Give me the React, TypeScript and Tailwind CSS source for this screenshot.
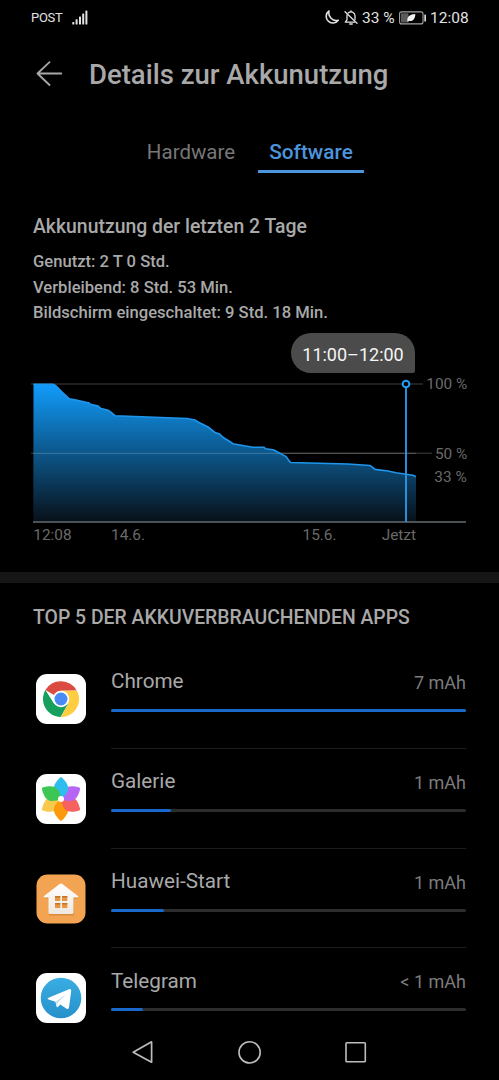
import type { ReactNode } from "react";

interface AppUsage {
  name: string;
  usage: string;
  percent: number;
  icon: ReactNode;
}

// Battery level over the last two days, in chart pixels
const LEVELS =
  "33.5,8.3 53,8.3 55.5,9.5 62,16 69,22.7 76,24 89,27 90.5,28.3 98,30 101,32.5 108,34.2 110.5,36 115,39.7 187,42.5 195,44 199,46.5 208,51 215,56.5 219.5,58 224,62 229,65 233,67.7 244,69.8 253,71.3 264,71.3 265.5,72.8 274,74 277,75.8 286,80.5 288.5,84 290.5,86.5 348,88 370,89.5 372,90.8 375,93.4 388,95 396,96.8 406,98.3 413,99.3 416,100.7";

function ChromeIcon() {
  return (
    <svg width="50" height="50" viewBox="0 0 50 50">
      <rect width="50" height="50" rx="11" fill="#fff" />
      <path d="M25 25 L9.4 16 A18 18 0 0 1 40.6 16.5 L25 16.7 Z" fill="#dc4b41" />
      <path d="M25 16.7 L41 16.7 A18 18 0 0 1 25 43 L32.2 29.2 Z" fill="#fecd40" />
      <path d="M9.4 16 L17.8 29.2 L25 33.3 L32.2 29.2 L24.6 43 A18 18 0 0 1 9.4 16 Z" fill="#17a05d" />
      <circle cx="25" cy="25" r="8.3" fill="#fff" />
      <circle cx="25" cy="25" r="6.5" fill="#4a8af4" />
    </svg>
  );
}

function GalleryIcon() {
  return (
    <svg width="50" height="50" viewBox="0 0 50 50">
      <defs>
        <path id="petal" d="M24.2 3.4 Q25 2.7 25.8 3.4 C29 6.5 31.6 9.6 32.2 13.4 C32.6 17.5 29.5 21.5 25 25 C20.5 21.5 17.4 17.5 17.8 13.4 C18.4 9.6 21 6.5 24.2 3.4 Z" />
      </defs>
      <rect width="50" height="50" rx="11" fill="#fff" />
      <use href="#petal" fill="#f9c94d" transform="rotate(240 25 25)" />
      <use href="#petal" fill="#fb9a0c" transform="rotate(180 25 25)" />
      <use href="#petal" fill="#f6625f" transform="rotate(120 25 25)" />
      <use href="#petal" fill="#b765f5" transform="rotate(60 25 25)" />
      <use href="#petal" fill="#2fbdee" />
      <use href="#petal" fill="#3dc653" transform="rotate(300 25 25)" />
      <circle cx="25" cy="25" r="3" fill="#fff" />
    </svg>
  );
}

function HomeIcon() {
  return (
    <svg width="50" height="50" viewBox="0 0 50 50">
      <defs>
        <linearGradient id="wall" x1="0" y1="0" x2="0" y2="1">
          <stop offset="0" stopColor="#ffffff" />
          <stop offset="1" stopColor="#eee7df" />
        </linearGradient>
      </defs>
      <rect x="0.5" y="0.5" width="49" height="49" rx="11" fill="#f3a453" />
      <path d="M25 10.5 L43 24 L38 25 V41.5 H13 V25 L8 24 Z" fill="#c77d31" opacity="0.6" />
      <path
        d="M24 9.8 Q25 9 26 9.8 L42 22 Q43 23.4 41.5 23.4 H37.5 V38.5 Q37.5 40 36 40 H14 Q12.5 40 12.5 38.5 V23.4 H8.5 Q7 23.4 8 22 Z"
        fill="url(#wall)"
      />
      <path d="M19 22h5.3v5H19zM26 22h5.3v5H26zM19 29h5.3v5H19zM26 29h5.3v5H26z" fill="#e79642" />
      <path d="M19 22h5.3v1.5H19zM26 22h5.3v1.5H26zM19 29h5.3v1.5H19zM26 29h5.3v1.5H26z" fill="#c3752c" />
    </svg>
  );
}

function TelegramIcon() {
  return (
    <svg width="50" height="50" viewBox="0 0 50 50">
      <defs>
        <linearGradient id="sky" x1="0" y1="0" x2="0" y2="1">
          <stop offset="0" stopColor="#39aee2" />
          <stop offset="1" stopColor="#2790cb" />
        </linearGradient>
      </defs>
      <rect width="50" height="50" rx="11" fill="#fff" />
      <circle cx="25" cy="25" r="20.3" fill="url(#sky)" />
      <path
        d="M12.5 24.8 L33 16.2 Q35.4 15.5 35.2 18 L33 34.6 Q32.5 37 30.2 35.5 L24.4 31.4 L21.8 34 Q20.8 34.8 20.5 33.2 L19.4 28.8 L12.5 26.5 Q10.6 25.7 12.5 24.8 Z"
        fill="#fff"
      />
      <path d="M19.6 28.6 L30 21.2 L22.2 29.6 L21.3 33 Z" fill="#c9e3f2" />
    </svg>
  );
}

const apps: AppUsage[] = [
  { name: "Chrome", usage: "7 mAh", percent: 100, icon: <ChromeIcon /> },
  { name: "Galerie", usage: "1 mAh", percent: 17, icon: <GalleryIcon /> },
  { name: "Huawei-Start", usage: "1 mAh", percent: 15, icon: <HomeIcon /> },
  { name: "Telegram", usage: "< 1 mAh", percent: 9.1, icon: <TelegramIcon /> },
];

function StatusBar() {
  return (
    <div className="flex h-9 shrink-0 items-center justify-between pr-[30px] pl-[31px] text-[#e2e2e2]">
      <div className="flex items-center">
        <span className="w-[41px] text-[13px] tracking-[-0.3px] whitespace-nowrap">POST</span>
        <svg width="16" height="15" viewBox="0 0 16 15" className="-mt-px" fill="#e2e2e2">
          <rect x="0.3" y="12" width="2" height="2.5" rx="0.6" />
          <rect x="3.6" y="9.3" width="2" height="5.2" rx="0.6" />
          <rect x="7" y="6.5" width="2" height="8" rx="0.6" />
          <rect x="10.2" y="3.5" width="2" height="11" rx="0.6" />
          <rect x="13.4" y="0.5" width="2" height="14" rx="0.6" />
        </svg>
      </div>
      <div className="flex items-center whitespace-nowrap">
        <svg width="15" height="15" viewBox="0 0 15 15" className="-mt-px" fill="none" stroke="#e2e2e2" strokeWidth="1.6" strokeLinejoin="round">
          <path d="M5 1 A6.6 6.6 0 1 0 14.2 10.2 A7.6 7.6 0 0 1 5 1 Z" />
        </svg>
        <svg width="14" height="15" viewBox="0 0 14 15" className="-mt-px ml-[5px]" fill="none" stroke="#e2e2e2" strokeWidth="1.3" strokeLinecap="round" strokeLinejoin="round">
          <path d="M1 1.7 L13 13.2" />
          <path d="M4.2 3 A4 4 0 0 1 11 5.8 V9.6" />
          <path d="M3 5 V9.8 L1.3 12.2 H10.5" />
          <path d="M7 0.8 V1.8 M5.7 14 H8.3" />
        </svg>
        <span className="mt-[2px] ml-[4px] w-[34px] text-[15.5px]">33 %</span>
        <svg width="28" height="14" viewBox="0 0 28 14" className="-mt-px ml-[3px]">
          <rect x="0.6" y="0.9" width="23.4" height="12" rx="2" fill="none" stroke="#a4a4a4" strokeWidth="1.1" />
          <rect x="2" y="2.3" width="7.5" height="9.2" fill="#5a5a5a" />
          <path d="M8.5 10.5 C7.5 5.5 11 3.2 16.3 3 C16.3 8 13.8 10.8 10 9.8 L8.8 11 Z" fill="#f2f2f2" />
          <rect x="25.3" y="3.5" width="1.7" height="7" rx="0.5" fill="#d8d8d8" />
        </svg>
        <span className="mt-[2px] ml-[3px] w-[39px] text-[15.5px]">12:08</span>
      </div>
    </div>
  );
}

function BatteryChart() {
  return (
    <div className="relative mt-[7.6px] pt-[43px]">
      {/* selected time range */}
      <div className="absolute top-0 left-[291px] flex h-[40px] w-[124px] items-center justify-center rounded-[20px] rounded-br-[2px] bg-[#4b4b4b] pt-[2px] text-[18px] whitespace-nowrap text-[#f5f5f5]">
        11:00–12:00
      </div>
      <svg width="499" height="170" viewBox="0 0 499 170" className="block">
        <defs>
          <linearGradient id="level" gradientUnits="userSpaceOnUse" x1="0" y1="8" x2="0" y2="145">
            <stop offset="0" stopColor="#119cfb" />
            <stop offset="0.5" stopColor="#0c578b" />
            <stop offset="1" stopColor="#08111a" />
          </linearGradient>
        </defs>
        <path d="M31 8H423" stroke="#2b2b2b" strokeWidth="1.5" />
        <path d="M31 77.3H432" stroke="#2b2b2b" strokeWidth="1.5" />
        <polygon points={`33.3,146 ${LEVELS} 416,146`} fill="url(#level)" />
        <path d="M33 77.3H416" stroke="#ffffff" strokeOpacity="0.17" strokeWidth="1.2" />
        <polyline points={LEVELS} fill="none" stroke="#1e96ec" strokeWidth="1.6" />
        <path d="M33 146H466" stroke="#666c70" strokeWidth="1.6" />
        <path d="M406 11V146" stroke="#2b95e4" strokeWidth="1.9" />
        <circle cx="406" cy="8" r="3.3" fill="#000" stroke="#229cf2" strokeWidth="2.1" />
        <g fill="#6a6a6a" fontSize="15.4">
          <text x="467.3" y="13.3" textAnchor="end">100 %</text>
          <text x="467.3" y="82.6" textAnchor="end">50 %</text>
          <text x="466.7" y="106" textAnchor="end">33 %</text>
          <text x="33.3" y="163.5">12:08</text>
          <text x="111" y="163.5">14.6.</text>
          <text x="302.5" y="163.5">15.6.</text>
          <text x="416" y="163.5" textAnchor="end">Jetzt</text>
        </g>
      </svg>
    </div>
  );
}

function AppRow({ app, last }: { app: AppUsage; last: boolean }) {
  return (
    <div className="flex h-[99.75px] shrink-0 pr-[33px] pl-[36px]">
      <div className="mt-[25px] mr-[25px] h-[50px] w-[50px] shrink-0">{app.icon}</div>
      <div className={`flex flex-1 flex-col border-b ${last ? "border-transparent" : "border-[#1c1c1c]"}`}>
        <div className="mt-[17px] flex h-[30px] items-center justify-between">
          <span className="mt-[2px] text-[20.7px] text-[#a9a9a9]">{app.name}</span>
          <span className="mt-[3px] text-[18px] text-[#7c7c7c]">{app.usage}</span>
        </div>
        <div className="mt-[13px] h-[3px] rounded-full bg-[#2c2c2c]">
          <div className="h-full rounded-full bg-[#1967cb]" style={{ width: `${app.percent}%` }} />
        </div>
      </div>
    </div>
  );
}

export default function App() {
  return (
    <div className="flex h-[1080px] w-[499px] flex-col overflow-hidden bg-black font-['Roboto',sans-serif]">
      <StatusBar />

      <header className="flex h-[76px] shrink-0 items-center pl-[36px]">
        <svg width="27" height="26" viewBox="0 0 27 26" fill="none" stroke="#a8a8a8" strokeWidth="1.8" strokeLinecap="round" strokeLinejoin="round">
          <path d="M25.3 12.5H1.5M13.5 1.2L1.5 12.5L13.5 24" />
        </svg>
        <h1 className="mt-[2px] ml-[26px] text-[27.5px] font-medium whitespace-nowrap text-[#a9a9a9]">Details zur Akkunutzung</h1>
      </header>

      <nav className="flex h-[61px] shrink-0 pl-[136px]">
        <div className="flex w-[122px] justify-center pt-[25px] pr-[12px] text-[20.5px] text-[#777777]">Hardware</div>
        <div className="flex w-[106px] justify-center border-b-[3px] border-[#4c95dd] pt-[25px] text-[20.8px] font-medium text-[#4c95dd]">Software</div>
      </nav>

      <section className="h-[399px] shrink-0">
        <div className="px-[33px] pt-[41px] font-medium whitespace-nowrap text-[#a9a9a9]">
          <h2 className="text-[19.4px] leading-[26px]">Akkunutzung der letzten 2 Tage</h2>
          <div className="mt-[9.2px] text-[16.6px] leading-[25.4px]">
            <p>Genutzt: 2 T 0 Std.</p>
            <p>Verbleibend: 8 Std. 53 Min.</p>
            <p>Bildschirm eingeschaltet: 9 Std. 18 Min.</p>
          </div>
        </div>
        <BatteryChart />
      </section>

      <div className="h-[11px] shrink-0 bg-[#161616]" />

      <section className="flex h-[441px] shrink-0 flex-col overflow-hidden">
        <h2 className="h-[66px] shrink-0 pt-[20px] pl-[33px] text-[19.4px] font-medium whitespace-nowrap text-[#a9a9a9]">
          TOP 5 DER AKKUVERBRAUCHENDEN APPS
        </h2>
        {apps.map((app, i) => (
          <AppRow key={app.name} app={app} last={i === apps.length - 1} />
        ))}
      </section>

      <footer className="flex flex-1 items-center justify-between pr-[132px] pl-[131px]">
        <svg width="23" height="26" viewBox="0 0 23 26" fill="none" stroke="#bdbdbd" strokeWidth="1.7" strokeLinejoin="round">
          <path d="M20.6 2.8V23.2L2.2 13.2Z" />
        </svg>
        <svg width="24" height="26" viewBox="0 0 24 26" fill="none" stroke="#bdbdbd" strokeWidth="1.6">
          <circle cx="11.6" cy="13.4" r="10.6" />
        </svg>
        <svg width="22" height="26" viewBox="0 0 22 26" fill="none" stroke="#bdbdbd" strokeWidth="1.6">
          <rect x="1" y="3.8" width="19.3" height="19" rx="0.8" />
        </svg>
      </footer>
    </div>
  );
}
